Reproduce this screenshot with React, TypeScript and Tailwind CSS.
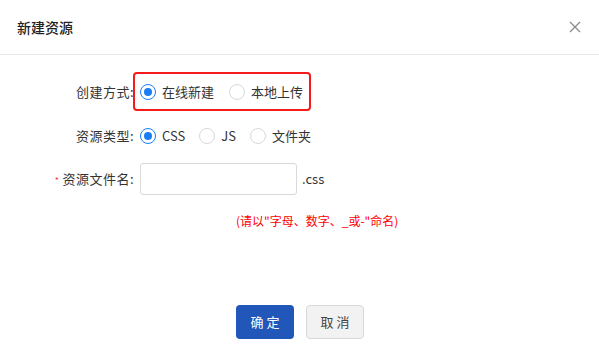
import React from "react";

function Radio({ checked, label }: { checked?: boolean; label: string }) {
  return (
    <label className="flex items-center gap-[6px] cursor-pointer">
      <span
        className={
          checked
            ? "w-[16px] h-[16px] rounded-full border border-[#1a7ef2] flex items-center justify-center bg-white"
            : "w-[16px] h-[16px] rounded-full border border-[#d9d9d9] bg-white"
        }
      >
        {checked && <span className="w-[8px] h-[8px] rounded-full bg-[#1a7ef2]" />}
      </span>
      <span className="text-[13px] text-[#333]">{label}</span>
    </label>
  );
}

export default function App() {
  return (
    <div
      className="w-[599px] h-[348px] bg-white flex flex-col"
      style={{ fontFamily: '"Noto Sans CJK SC", "Noto Sans", sans-serif' }}
    >
      <div className="h-[55px] border-b border-[#e8e8e8] flex items-center justify-between pl-[17px] pr-[18px]">
        <span className="text-[14px] font-medium text-[#222]">新建资源</span>
        <svg width="12" height="12" viewBox="0 0 12 12" className="text-[#888]">
          <path d="M1 1 L11 11 M11 1 L1 11" stroke="currentColor" strokeWidth="1.2" fill="none" />
        </svg>
      </div>

      <div className="flex flex-col pt-[25px]">
        <div className="flex items-center h-[24px]">
          <div className="w-[135px] text-right text-[13px] text-[#333] pr-[1px] tracking-[0.5px]">创建方式:</div>
          <div className="relative flex items-center gap-[15px] ml-[5px]">
            <div className="absolute -left-[7px] -right-[8px] -top-[10px] -bottom-[9px] border-2 border-[#f51b1b] rounded-[4px]" />
            <Radio checked label="在线新建" />
            <Radio label="本地上传" />
          </div>
        </div>

        <div className="flex items-center h-[24px] mt-[20px]">
          <div className="w-[135px] text-right text-[13px] text-[#333] pr-[1px] tracking-[0.5px]">资源类型:</div>
          <div className="flex items-center gap-[14px] ml-[5px]">
            <Radio checked label="CSS" />
            <Radio label="JS" />
            <Radio label="文件夹" />
          </div>
        </div>

        <div className="flex items-center h-[32px] mt-[15px]">
          <div className="w-[135px] text-right text-[13px] text-[#333] pr-[1px] tracking-[0.5px]">
            <span className="text-[#f33] text-[9px] mr-[3px] align-middle">*</span>资源文件名:
          </div>
          <input
            className="ml-[5px] w-[157px] h-[32px] border border-[#d9d9d9] rounded-[3px] outline-none px-2"
            type="text"
          />
          <span className="ml-[5px] text-[13px] text-[#333]">.css</span>
        </div>

        <div className="pl-[236px] mt-[16px] text-[12px] text-[#ff0000] leading-[20px]">
          (请以"字母、数字、_或-"命名)
        </div>
      </div>

      <div className="flex justify-center gap-[12px] mt-auto mb-[9px] pl-[1px]">
        <button className="w-[58px] h-[34px] rounded-[4px] bg-[#2057b8] text-white text-[13px] tracking-[3px] pl-[3px]">
          确定
        </button>
        <button className="w-[58px] h-[34px] rounded-[4px] bg-[#f2f2f2] border border-[#d9d9d9] text-[#444] text-[13px] tracking-[3px] pl-[3px]">
          取消
        </button>
      </div>
    </div>
  );
}
